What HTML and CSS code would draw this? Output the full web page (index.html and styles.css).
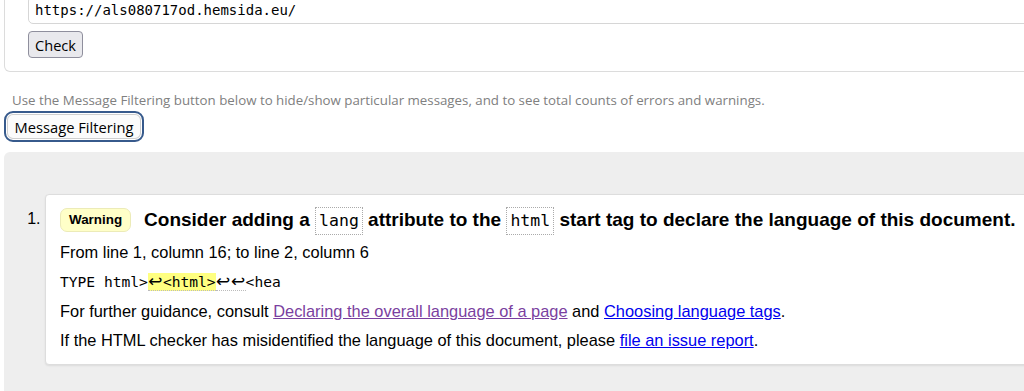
FILE: index.html
```html
<!DOCTYPE html>
<html lang="en">
<head>
    <meta charset="UTF-8">
    <meta name="viewport" content="width=device-width, initial-scale=1.0">
    <title>Nu Html Checker</title>
    <link rel="stylesheet" href="styles.css">
</head>
<body>

    <div class="page">
        <form class="check-form">
            <input class="url" type="text" value="https://als080717od.hemsida.eu/">
            <div><button type="button" class="check">Check</button></div>
        </form>

        <p class="hint">Use the Message Filtering button below to hide/show particular messages, and to see total counts of errors and warnings.</p>
        <button type="button" class="filter">Message Filtering</button>

        <div class="results">
            <ol>
                <li class="card">
                    <div class="card-body">
                        <p class="msg">
                            <span class="badge">Warning</span>
                            <span class="title">Consider adding a <code>lang</code> attribute to the <code>html</code> start tag to declare the language of this document.</span>
                        </p>
                        <p class="loc">From line 1, column 16; to line 2, column 6</p>
                        <p class="extract"><code>TYPE html&gt;<b><span class="nl">↩</span>&lt;html&gt;</b><span class="tail"><span class="nl">↩</span><span class="nl">↩</span></span>&lt;hea</code></p>
                        <p>For further guidance, consult <a href="#" class="visited">Declaring the overall language of a page</a> and <a href="#">Choosing language tags</a>.</p>
                        <p>If the HTML checker has misidentified the language of this document, please <a href="#">file an issue report</a>.</p>
                    </div>
                </li>
            </ol>
        </div>
    </div>

</body>
</html>
```

FILE: styles.css
```css
body {
    margin: 0;
    background-color: #ffffff;
    font-family: 'Liberation Sans', Arial, sans-serif;
    color: #000;
    overflow: hidden;
}

.page {
    width: 1120px;
}

.check-form {
    margin: -4px 0 0 4px;
    padding: 0 14px 13px 23px;
    border: 1px solid #dcdcdc;
    border-top: none;
    border-radius: 0 0 6px 6px;
    display: flex;
    flex-direction: column;
    gap: 7px;
}

.url {
    box-sizing: border-box;
    width: 100%;
    height: 28px;
    padding: 0 6px;
    border: 1px solid #d6d6d6;
    border-radius: 5px;
    font-family: 'DejaVu Sans Mono', monospace;
    font-size: 14px;
    color: #000;
}

.check {
    height: 27px;
    padding: 0 6px;
    font-family: 'Open Sans', sans-serif;
    font-size: 14.6px;
    background-color: #e9e9ed;
    border: 1px solid #8f8f9d;
    border-radius: 4px;
    color: #000;
}

.hint {
    margin: 18px 0 0 12px;
    font-family: 'Open Sans', sans-serif;
    font-size: 13.3px;
    line-height: 20px;
    color: #808080;
}

.filter {
    display: block;
    margin: 1px 0 0 4px;
    width: 140px;
    height: 31px;
    padding: 0;
    font-family: 'Open Sans', sans-serif;
    font-size: 14.7px;
    color: #000;
    background-color: #fbfbfb;
    border: 2px solid #375a8c;
    border-radius: 9px;
    box-shadow: inset 0 0 0 1px #ffffff, inset 0 0 0 2px #cfcfcf;
}

.results {
    margin: 10px 0 0 4px;
    padding: 42px 0 28px 0;
    background-color: #eeeeee;
    border-radius: 6px 0 0 0;
}

.results ol {
    margin: 0;
    padding: 0 0 0 41px;
}

.card {
    padding: 11px 14px 14px 14px;
    background-color: #fff;
    border: 1px solid #dddddd;
    border-radius: 4px;
    box-shadow: 0 1px 2px rgba(0, 0, 0, 0.08);
    font-size: 16.4px;
}

.card::marker {
    font-size: 16px;
}

.card-body {
    display: flex;
    flex-direction: column;
    gap: 9px;
}

.card p {
    margin: 0;
    line-height: 20px;
}

.card .msg {
    display: flex;
    align-items: center;
    gap: 13px;
    margin-bottom: -2px;
    line-height: 28px;
}

.badge {
    padding: 1px 8px;
    line-height: 20px;
    font-size: 13.4px;
    font-weight: bold;
    background-color: #ffffc8;
    border: 1px solid #ecebb8;
    border-radius: 7px;
}

.title {
    font-size: 19px;
    font-weight: bold;
    white-space: nowrap;
}

.title code {
    display: inline-block;
    padding: 0 3px;
    line-height: 26px;
    font-family: 'DejaVu Sans Mono', monospace;
    font-size: 16.5px;
    font-weight: normal;
    border: 1px dotted #aaaaaa;
    vertical-align: middle;
}

.extract code {
    font-family: 'DejaVu Sans Mono', monospace;
    font-size: 14.6px;
}

.extract .nl {
    display: inline-block;
    width: 15px;
    text-align: center;
    font-family: 'DejaVu Sans', sans-serif;
    font-size: 17px;
    line-height: 18px;
}

.extract b {
    font-weight: normal;
    background-color: #ffff80;
    border-bottom: 1px dotted #bbb;
}

.extract .tail {
    border-bottom: 1px dotted #bbb;
}

a {
    color: #0000ee;
}

a.visited {
    color: #7a3fa0;
}
```
